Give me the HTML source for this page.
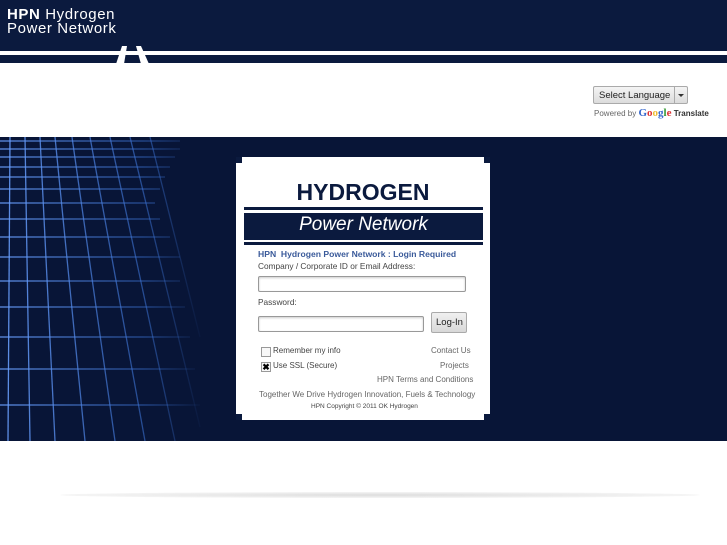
<!DOCTYPE html>
<html><head><meta charset="utf-8"><style>
*{margin:0;padding:0;box-sizing:border-box}
body{width:727px;height:545px;background:#fff;position:relative;overflow:hidden;font-family:"Liberation Sans",sans-serif}
.abs{position:absolute}
.t{font-size:8px;color:#444;position:absolute;white-space:nowrap}
.inp{position:absolute;background:#fff;border:1px solid #999;border-radius:2px;box-shadow:inset 0 1px 2px #ccc}
</style></head><body>
<div class="abs" style="left:0;top:0;width:727px;height:51px;background:#0b1a3e"></div>
<div class="abs" style="left:0;top:55px;width:727px;height:8px;background:#0b1a3e"></div>
<div class="abs" style="left:7px;top:8px;color:#fff;font-size:15px;line-height:13.5px;letter-spacing:0.6px"><b>HPN</b> Hydrogen<br>Power Network</div>
<svg class="abs" style="left:110px;top:44px" width="45" height="20"><polygon points="12,2 17,2 14,20 6,20" fill="#fff"/><polygon points="26,2 31,2 39,20 31,20" fill="#fff"/></svg>
<div class="abs" style="left:593px;top:86px;width:95px;height:18px;border:1px solid #aaa;border-radius:2px;background:linear-gradient(#f4f4f4,#dcdcdc)"></div>
<div class="abs" style="left:674px;top:86px;width:1px;height:18px;background:#aaa"></div>
<div class="t" style="left:599px;top:90px;font-size:9.5px;color:#222">Select Language</div>
<div class="abs" style="left:678px;top:94px;border:3px solid transparent;border-top:3px solid #333"></div>
<div class="t" style="left:594px;top:107px;font-size:8px;color:#666">Powered by <span style="font-family:'Liberation Serif',serif;font-size:11px;font-weight:bold"><span style="color:#3366cc">G</span><span style="color:#d33">o</span><span style="color:#eb3">o</span><span style="color:#3366cc">g</span><span style="color:#393">l</span><span style="color:#d33">e</span></span> <b style="color:#333">Translate</b></div>
<div class="abs" style="left:0;top:137px;width:727px;height:304px;background:#081537"></div>
<svg class="abs" style="left:0;top:137px" width="210" height="304">
<defs><linearGradient id="g" gradientUnits="userSpaceOnUse" x1="0" y1="0" x2="205" y2="0"><stop offset="0" stop-color="#6aa0ff" stop-opacity=".9"/><stop offset=".7" stop-color="#3a70d0" stop-opacity=".6"/><stop offset="1" stop-color="#3a70d0" stop-opacity="0"/></linearGradient></defs>
<g stroke="url(#g)" stroke-width="1.3" fill="none">
<line x1="0" y1="4" x2="180" y2="4"/><line x1="0" y1="12" x2="180" y2="12"/><line x1="0" y1="20" x2="175" y2="20"/><line x1="0" y1="30" x2="170" y2="30"/><line x1="0" y1="40" x2="165" y2="40"/><line x1="0" y1="52" x2="160" y2="52"/><line x1="0" y1="66" x2="155" y2="66"/><line x1="0" y1="82" x2="160" y2="82"/><line x1="0" y1="100" x2="170" y2="100"/><line x1="0" y1="120" x2="180" y2="120"/><line x1="0" y1="144" x2="180" y2="144"/><line x1="0" y1="170" x2="185" y2="170"/><line x1="0" y1="200" x2="190" y2="200"/><line x1="0" y1="232" x2="195" y2="232"/><line x1="0" y1="268" x2="200" y2="268"/>
<line x1="10" y1="0" x2="8" y2="304"/><line x1="25" y1="0" x2="30" y2="304"/><line x1="40" y1="0" x2="55" y2="304"/><line x1="55" y1="0" x2="85" y2="304"/><line x1="72" y1="0" x2="115" y2="304"/><line x1="90" y1="0" x2="145" y2="304"/><line x1="110" y1="0" x2="175" y2="304"/><line x1="130" y1="0" x2="200" y2="290"/><line x1="150" y1="0" x2="200" y2="200"/>
</g></svg>
<div class="abs" style="left:236px;top:157px;width:254px;height:263px;background:#fff"></div>
<div class="abs" style="left:236px;top:157px;width:6px;height:6px;background:#0b1a3e"></div>
<div class="abs" style="left:484px;top:157px;width:6px;height:6px;background:#0b1a3e"></div>
<div class="abs" style="left:236px;top:414px;width:6px;height:6px;background:#0b1a3e"></div>
<div class="abs" style="left:484px;top:414px;width:6px;height:6px;background:#0b1a3e"></div>
<div class="t" style="left:236px;width:254px;text-align:center;top:179px;font-size:23px;font-weight:bold;color:#0b1a3e">HYDROGEN</div>
<div class="abs" style="left:244px;top:207px;width:239px;height:3px;background:#0b1a3e"></div>
<div class="abs" style="left:244px;top:213px;width:239px;height:27px;background:#0b1a3e"></div>
<div class="abs" style="left:244px;top:242px;width:239px;height:3px;background:#0b1a3e"></div>
<div class="t" style="left:244px;width:239px;text-align:center;top:214px;font-size:19px;font-style:italic;color:#fff">Power Network</div>
<div class="t" style="left:258px;top:249px;font-size:8.6px;font-weight:bold;color:#3a5a9a">HPN&nbsp; Hydrogen Power Network : Login Required</div>
<div class="t" style="left:258px;top:261px;font-size:8.3px">Company / Corporate ID or Email Address:</div>
<div class="inp" style="left:258px;top:276px;width:208px;height:16px"></div>
<div class="t" style="left:258px;top:297px;font-size:8.3px">Password:</div>
<div class="inp" style="left:258px;top:316px;width:166px;height:16px"></div>
<div class="abs" style="left:431px;top:312px;width:36px;height:21px;border:1px solid #aaa;border-radius:2px;background:linear-gradient(#f0f0f0,#d8d8d8)"></div>
<div class="t" style="left:436px;top:317px;font-size:9.5px;color:#222">Log-In</div>
<div class="abs" style="left:261px;top:347px;width:10px;height:10px;border:1px solid #999;background:#f8f8f8"></div>
<div class="t" style="left:273px;top:346px">Remember my info</div>
<div class="abs" style="left:261px;top:362px;width:10px;height:10px;border:1px solid #999;background:#f8f8f8;font-size:9px;line-height:8px;text-align:center;font-weight:bold">✖</div>
<div class="t" style="left:273px;top:361px">Use SSL (Secure)</div>
<div class="t" style="left:431px;top:346px;color:#666">Contact Us</div>
<div class="t" style="left:440px;top:361px;color:#666">Projects</div>
<div class="t" style="left:377px;top:375px;color:#666">HPN Terms and Conditions</div>
<div class="t" style="left:259px;top:390px;color:#666">Together We Drive Hydrogen Innovation, Fuels &amp; Technology</div>
<div class="t" style="left:311px;top:403px;font-size:6.5px;color:#444">HPN Copyright © 2011 OK Hydrogen</div>
<div class="abs" style="left:60px;top:492px;width:640px;height:6px;border-radius:50%;background:radial-gradient(ellipse at center,#ddd 0%,#eee 50%,rgba(255,255,255,0) 100%)"></div>
</body></html>
